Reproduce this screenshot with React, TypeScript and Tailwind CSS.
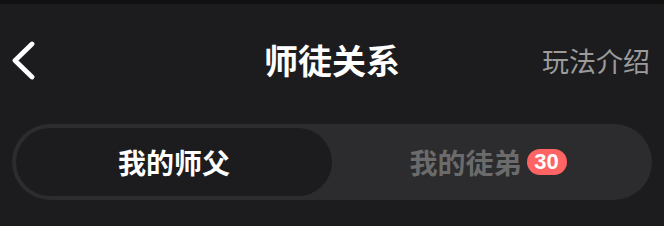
const font = '[font-family:"Noto_Sans_CJK_SC","Noto_Sans",sans-serif]'

const BackIcon = () => (
  <svg width="24" height="40" viewBox="0 0 24 40" fill="none">
    <polyline
      points="20,4 3,20.5 20,37"
      stroke="#ffffff"
      strokeWidth="4.8"
      strokeLinecap="round"
      strokeLinejoin="round"
    />
  </svg>
)

export default function App() {
  return (
    <div className={`w-[664px] h-[226px] bg-[#1c1c1e] ${font}`}>
      <div className="h-[4px] bg-[#111112]" />

      {/* header */}
      <div className="h-[112px] grid grid-cols-[1fr_auto_1fr] items-center">
        <div className="pl-3 flex items-center">
          <BackIcon />
        </div>
        <div className="text-[34px] font-bold text-white leading-none">师徒关系</div>
        <div className="pr-[14px] flex justify-end text-[27px] text-[#9b9b9b] leading-none">玩法介绍</div>
      </div>

      {/* tabs */}
      <div className="mt-2 mx-3 h-[76px] rounded-full bg-[#2c2c2e] p-1 grid grid-cols-2">
        <div className="rounded-full bg-[#1c1c1e] flex items-center justify-center text-[28px] font-bold text-white leading-none">
          我的师父
        </div>
        <div className="flex items-center justify-center text-[28px] font-bold text-[#6b6b6b] leading-none pr-1">
          <span>我的徒弟</span>
          <span className="ml-[5px] w-[40px] h-[26px] rounded-full bg-[#ff6464] flex items-center justify-center text-white text-[22px] font-semibold leading-none [font-family:'Liberation_Sans',Arial,sans-serif]">
            30
          </span>
        </div>
      </div>
    </div>
  )
}
